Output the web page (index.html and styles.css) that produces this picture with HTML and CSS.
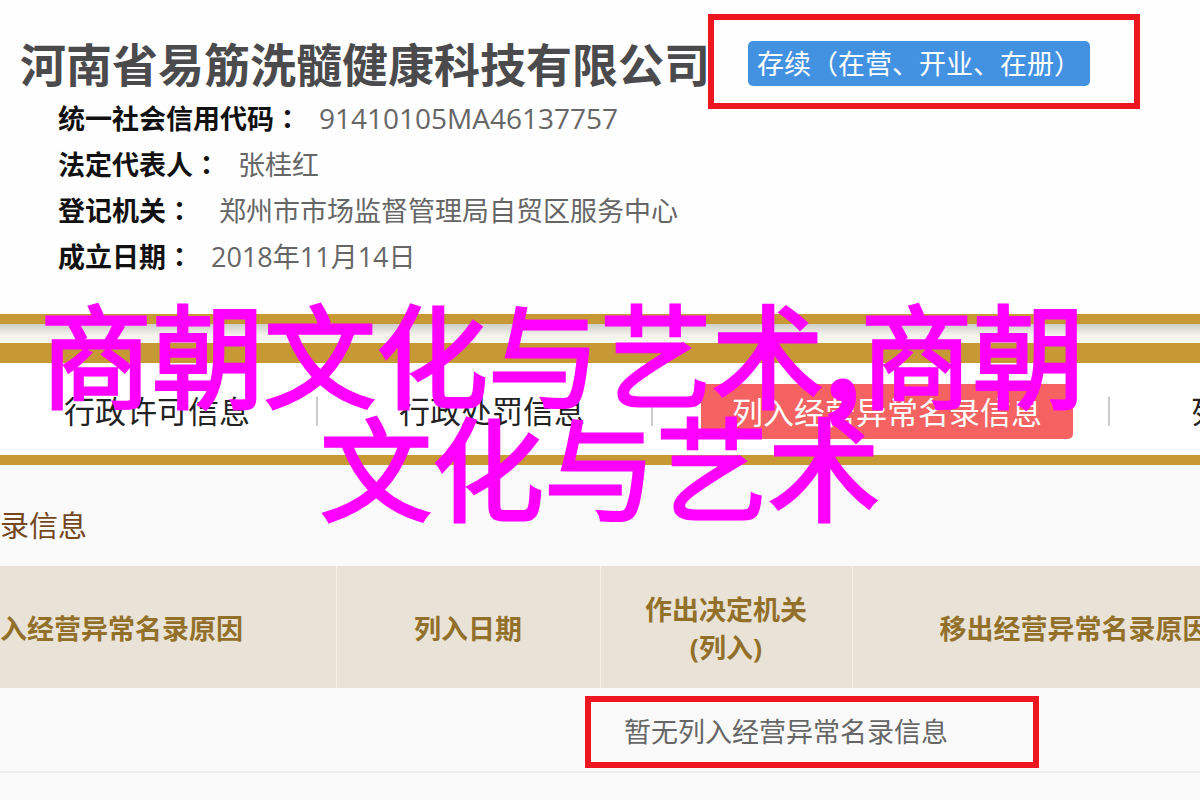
FILE: index.html
```html
<!DOCTYPE html>
<html lang="zh-CN">
<head>
<meta charset="utf-8">
<title>河南省易筋洗髓健康科技有限公司</title>
<link rel="stylesheet" href="styles.css">
</head>
<body>
<header class="company">
  <div class="company-head">
    <h1 class="company-name">河南省易筋洗髓健康科技有限公司</h1>
    <div class="mark mark-status"><span class="badge">存续（在营、开业、在册）</span></div>
  </div>
  <dl class="facts">
    <div class="fact"><dt>统一社会信用代码<span class="colon" lang="zh-TW">：</span></dt><dd class="code">91410105MA46137757</dd></div>
    <div class="fact"><dt>法定代表人<span class="colon" lang="zh-TW">：</span></dt><dd>张桂红</dd></div>
    <div class="fact fact-wide"><dt>登记机关<span class="colon" lang="zh-TW">：</span></dt><dd>郑州市市场监督管理局自贸区服务中心</dd></div>
    <div class="fact"><dt>成立日期<span class="colon" lang="zh-TW">：</span></dt><dd>2018年11月14日</dd></div>
  </dl>
</header>
<div class="divider"></div>
<nav class="tabs">
  <a class="tab tab-first" href="#permit">行政许可信息</a>
  <a class="tab" href="#penalty">行政处罚信息</a>
  <a class="tab tab-active" href="#abnormal"><span class="pill">列入经营异常名录信息</span></a>
  <a class="tab tab-last" href="#more">列</a>
</nav>
<main class="records" id="abnormal">
  <h2 class="records-title">录信息</h2>
  <table class="grid">
    <colgroup><col class="col-reason"><col class="col-date"><col class="col-office"><col></colgroup>
    <thead>
      <tr><th class="cell-start">入经营异常名录原因</th><th>列入日期</th><th>作出决定机关<br>(列入)</th><th class="cell-end">移出经营异常名录原因</th></tr>
    </thead>
    <tbody>
      <tr><td colspan="4"><div class="mark mark-empty">暂无列入经营异常名录信息</div></td></tr>
    </tbody>
  </table>
</main>
<div class="caption"><span class="caption-top">商朝文化与艺术<b>,</b>商朝</span><span class="caption-bottom">文化与艺术</span></div>
</body>
</html>
```

FILE: styles.css
```css
* { box-sizing: border-box; }
body {
  margin: 0;
  position: relative;
  min-height: 100vh;
  overflow: hidden;
  background: #fafafa;
  color: #666;
  font: 27px/38px "Open Sans", "Noto Sans CJK SC", sans-serif;
}
.company { padding: 14px 0 34px 20px; background: #fefefe; }
.company-head { display: flex; align-items: flex-start; white-space: nowrap; }
.company-name {
  margin: 0;
  color: #4b4b4d;
  font-size: 46px;
  line-height: 100px;
  height: 82px;
}
.mark { border: 6px solid #ee1620; }
.mark-status {
  position: relative;
  display: flex;
  align-items: center;
  margin: 0 0 -13px -2px;
  height: 95px;
  padding: 4px 44px 0 34px;
}
.badge {
  padding: 0 9px;
  border-radius: 5px;
  background: #4392e2;
  color: #fff;
  line-height: 45px;
}
.facts { margin: 0; padding-left: 38px; }
.fact { display: flex; gap: 18px; height: 46px; line-height: 46px; }
.fact-wide { gap: 26px; }
.fact dt { color: #111; font-weight: bold; }
.fact dd { margin: 0; }
.fact .code { font-size: 28px; line-height: 44px; }
.colon { font-family: "Noto Sans CJK TC", sans-serif; line-height: 1; }
.divider {
  height: 49px;
  border-top: 10px solid #c69934;
  border-bottom: 20px solid #c69934;
  background: linear-gradient(#cfcdc9, #f4f3ec 60%, #faf9ef);
}
.tabs {
  display: flex;
  align-items: center;
  height: 102px;
  padding-top: 5px;
  overflow: hidden;
  border-bottom: 10px solid #c69934;
  background: #fff;
  white-space: nowrap;
}
.tab {
  flex: none;
  padding: 0 66px 0 81px;
  border-left: 2px solid #ccc;
  color: #222;
  font-size: 31px;
  line-height: 29px;
  text-decoration: none;
}
.tab-first { padding-left: 64px; border-left: 0; }
.tab-active { padding: 0 35px 0 48px; color: #fff; }
.pill {
  display: block;
  margin: -13px 0;
  padding: 1px 31px 0;
  border-radius: 5px;
  background: #f56262;
  line-height: 54px;
}
.records-title {
  margin: 0;
  padding: 49px 0 29px;
  color: #74471f;
  font-size: 29px;
  font-weight: normal;
  line-height: 23px;
}
.grid { width: 100%; border-collapse: collapse; table-layout: fixed; }
.col-reason { width: 28%; }
.col-date { width: 22%; }
.col-office { width: 21%; }
.grid th {
  height: 122px;
  padding: 4px 0 0;
  border-right: 1px solid #f4f0e8;
  background: #e9e3d7;
  color: #93702a;
  white-space: nowrap;
}
.grid .cell-start { text-align: left; }
.grid .cell-end { padding-left: 87px; border-right: 0; text-align: left; }
.grid td { padding: 8px 0 3px 585px; border-bottom: 2px solid #eee; background: #f9f9f9; }
.mark-empty { width: 454px; padding: 0 33px; line-height: 60px; }
.caption {
  position: absolute;
  top: 295px;
  left: 0;
  right: 0;
  width: 1120px;
  margin: 0 auto;
  color: #f0f;
  font: 112px/113px "Noto Sans CJK SC", sans-serif;
  -webkit-text-stroke: 3px #f0f;
  white-space: nowrap;
  pointer-events: none;
}
.caption span { display: block; }
.caption-bottom { text-align: center; }
```
